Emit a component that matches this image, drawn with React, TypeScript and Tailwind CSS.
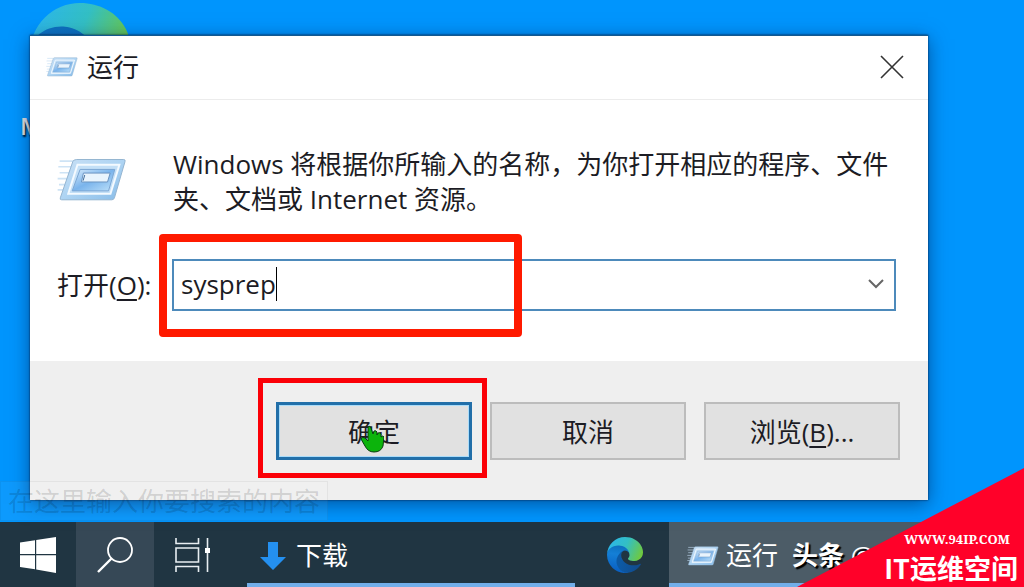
import { useState } from "react";

const uiFont = "font-['Open_Sans','Noto_Sans_CJK_SC',sans-serif]";

function RunIcon({ className }: { className?: string }) {
  return (
    <svg viewBox="20 34 212 136" className={className} aria-hidden="true">
      <defs>
        <linearGradient id="run-frame" x1="0" y1="0" x2="1" y2="1">
          <stop offset="0" stopColor="#c9e0f5" />
          <stop offset="0.5" stopColor="#aed4f3" />
          <stop offset="1" stopColor="#86bbe8" />
        </linearGradient>
        <linearGradient id="run-screen" x1="0" y1="0" x2="1" y2="1">
          <stop offset="0" stopColor="#d8ebfb" />
          <stop offset="0.5" stopColor="#7ab4ec" />
          <stop offset="1" stopColor="#bfe2fa" />
        </linearGradient>
      </defs>
      <path
        d="M28 45H80M24 62H74M28 80H68M22 98H62M26 116H56M22 132H50"
        stroke="#c3ddf3"
        strokeWidth="5"
        opacity="0.8"
      />
      <path
        d="M80 40H222Q228 40 226 46L194 156Q192 162 186 162H34Q28 162 30 156L68 46Q70 40 80 40Z"
        fill="url(#run-frame)"
        stroke="#94b4d0"
        strokeWidth="3"
      />
      <path d="M82 56H209L182 144H54Z" fill="#c4e0f7" stroke="#f4faff" strokeWidth="6" />
      <path d="M90 70H195L176 135H66Z" fill="url(#run-screen)" stroke="#7ba6d2" strokeWidth="3" />
      <path d="M100 81H181L173 108H94Z" fill="#e9f4fd" stroke="#6b94c0" strokeWidth="3" />
      <path d="M104 87L99 104" stroke="#3e6a9b" strokeWidth="3" />
    </svg>
  );
}

function EdgeIcon({ className }: { className?: string }) {
  return (
    <svg viewBox="0 0 256 256" className={className} aria-hidden="true">
      <defs>
        <linearGradient id="edge-deep" x1="0.2" y1="0.5" x2="1" y2="0.6">
          <stop offset="0" stopColor="#0c59a4" />
          <stop offset="1" stopColor="#114a8b" />
        </linearGradient>
        <linearGradient id="edge-blue" x1="0.5" y1="0" x2="0.4" y2="0.9">
          <stop offset="0" stopColor="#0b6dba" />
          <stop offset="0.4" stopColor="#147fd6" />
          <stop offset="1" stopColor="#0a62c4" />
        </linearGradient>
        <linearGradient id="edge-green" x1="0" y1="0.3" x2="1" y2="0.6">
          <stop offset="0" stopColor="#2cb6ea" />
          <stop offset="0.5" stopColor="#33bfc4" />
          <stop offset="1" stopColor="#6fc93f" />
        </linearGradient>
      </defs>
      <path
        fill="url(#edge-deep)"
        d="M235.68 190.46a91.22 91.22 0 0 1-10.54 4.71 101.85 101.85 0 0 1-35.9 6.46c-47.32 0-88.54-32.55-88.54-74.32A31.52 31.52 0 0 1 117.13 99.95c-42.8 1.8-53.8 46.4-53.8 72.53 0 73.88 68.09 81.37 82.76 81.37 7.91 0 19.84-2.3 27-4.56l1.31-.44a128.34 128.34 0 0 0 66.6-52.8 4 4 0 0 0-5.32-5.59z"
      />
      <path
        fill="url(#edge-blue)"
        d="M105.73 241.42A79.2 79.2 0 0 1 83 220.08a80.72 80.72 0 0 1 29.5-120.13c3.12-1.47 8.45-4.13 15.54-4a32.35 32.35 0 0 1 25.69 13 31.88 31.88 0 0 1 6.36 18.66c0-.21 24.46-79.6-80-79.6-43.9 0-80 41.66-80 78.21a130.15 130.15 0 0 0 12.11 56 128 128 0 0 0 156.38 67.11 75.55 75.55 0 0 1-62.78-8z"
      />
      <path
        fill="url(#edge-green)"
        d="M152.33 148.86c-.81 1.05-3.3 2.5-3.3 5.66 0 2.61 1.7 5.12 4.72 7.23 14.38 10 41.49 8.68 41.56 8.68a59.56 59.56 0 0 0 30.27-8.35 61.38 61.38 0 0 0 30.43-52.88c.26-22.41-8-37.31-11.34-43.91C223.46 23.84 177.72 0 128 0A128 128 0 0 0 0 126.2c.48-36.54 36.8-66.05 80-66.05 3.5 0 23.46.34 42 10.07 16.34 8.58 24.9 18.94 30.85 29.21 6.18 10.67 7.28 24.15 7.28 29.52s-2.74 13.33-7.8 19.91z"
      />
    </svg>
  );
}

function HandCursor({ className }: { className?: string }) {
  return (
    <svg viewBox="0 0 24 28" className={className} aria-hidden="true">
      <path
        d="M8 2q2-2 3 1l2 6 1-3q2-1 3 1v3l1-2q2-1 3 1v3q2-2 3 0l-1 9q-2 6-9 6-6 0-9-6L1 14q1-3 4-1l3 3Z"
        fill="#0cb40c"
        stroke="#0b3d12"
        strokeWidth="1"
        strokeLinejoin="round"
      />
    </svg>
  );
}

function RunDialog() {
  const [command, setCommand] = useState("sysprep");

  return (
    <section
      aria-label="运行"
      className="relative border-t border-[#14598f] bg-white text-[26px] text-[#1c1c24] shadow-[0_4px_18px_rgba(0,30,80,0.55),0_0_2px_rgba(0,20,50,0.9)]"
    >
      <header className="flex h-16 items-center border-b border-[#ececec] pr-6 pb-0.5 pl-4">
        <RunIcon className="h-6 w-8" />
        <h1 className="ml-[9px] flex-1 leading-9">运行</h1>
        <button type="button" aria-label="关闭">
          <svg viewBox="0 0 24 24" className="size-6" fill="none" stroke="#333" strokeWidth="1.6">
            <path d="M1 1L23 23M23 1L1 23" />
          </svg>
        </button>
      </header>

      <div className="pr-8 pb-[50px] pl-[27px]">
        <div className="flex pt-[47px]">
          <RunIcon className="mt-2 h-[50px] w-[70px] shrink-0" />
          <p className="ml-[46px] leading-[35px]">
            Windows 将根据你所输入的名称，为你打开相应的程序、文件夹、文档或 Internet 资源。
          </p>
        </div>

        <div className="mt-[42px] flex items-center">
          <label htmlFor="command" className="w-[115px] whitespace-nowrap">
            打开(<u className="underline-offset-4">O</u>):
          </label>
          <div className="relative flex h-[52px] flex-1 items-center border-2 border-[#4d8abb] pr-2 pb-0.5 pl-[7px]">
            <input
              id="command"
              value={command}
              onChange={(e) => setCommand(e.target.value)}
              className="field-sizing-content leading-9 outline-none"
            />
            <span className="h-[34px] w-px bg-black" />
            <button type="button" aria-label="展开列表" className="ml-auto">
              <svg viewBox="0 0 20 20" className="size-5" fill="none" stroke="#666" strokeWidth="2">
                <path d="M3 6L10 13L17 6" />
              </svg>
            </button>
            <div className="pointer-events-none absolute -top-[27px] -left-[15px] h-[103px] w-[363px] rounded border-8 border-[#ff1a00]" />
          </div>
        </div>
      </div>

      <footer className="flex justify-end gap-[18px] bg-[#efefef] pt-[41px] pr-7 pb-10">
        <button
          type="button"
          className="relative h-[58px] w-[196px] border-[3px] border-[#226fa9] bg-[#e1e1e1] pt-0.5 shadow-[inset_0_0_0_1px_#a9dcfa]"
        >
          确定
          <HandCursor className="absolute top-[20px] left-[81px] h-7 w-6" />
          <span className="pointer-events-none absolute -top-[27px] -right-[18px] -bottom-[21px] -left-[21px] border-[5px] border-[#fb0007]" />
        </button>
        <button
          type="button"
          className="h-[58px] w-[196px] border-2 border-[#bcbcbc] bg-[#e1e1e1] pt-0.5"
        >
          取消
        </button>
        <button
          type="button"
          className="h-[58px] w-[196px] border-2 border-[#bcbcbc] bg-[#e1e1e1] pt-0.5"
        >
          浏览(<u className="underline-offset-4">B</u>)...
        </button>
      </footer>
    </section>
  );
}

function Taskbar() {
  return (
    <nav className="flex h-[65px] bg-[#203542] text-[26px] text-white">
      <button type="button" aria-label="开始" className="flex w-[76px] items-center justify-center">
        <svg viewBox="0 0 36 36" className="size-9" fill="white">
          <path d="M0 5.500L15 3.300V17H0ZM16.200 3.100L36 0V17H16.200ZM0 18.200H15V32.200L0 30ZM16.200 18.200H36V36L16.200 32.500Z" />
        </svg>
      </button>
      <button
        type="button"
        aria-label="搜索"
        className="flex w-[78px] items-center justify-center bg-[#364856]"
      >
        <svg viewBox="0 0 36 36" className="size-9" fill="none" stroke="white" strokeWidth="1.8">
          <circle cx="23" cy="13" r="12" />
          <path d="M14.500 21.500L1 35" strokeWidth="2.400" />
        </svg>
      </button>
      <button
        type="button"
        aria-label="任务视图"
        className="flex w-[76px] items-center justify-center"
      >
        <svg viewBox="0 0 36 36" className="size-9" fill="none" stroke="#e8eef2" strokeWidth="1.6">
          <path d="M2 1V6.500H24.500V1M2 35V29.500H24.500V35M33.500 1V35" />
          <path d="M2 11H24.500V25H2Z" />
          <path d="M31 11H36V16H31Z" fill="white" stroke="none" />
        </svg>
      </button>
      <button
        type="button"
        className="ml-[17px] flex w-[328px] items-center border-b-4 border-[#72aee9] pt-1.5 pl-[13px]"
      >
        <svg viewBox="0 0 26 28" className="h-7 w-[26px]" fill="#2490f0">
          <path d="M8 0H18V15H26L13 28L0 15H8Z" />
        </svg>
        <span className="ml-[10px]">下载</span>
      </button>
      <button
        type="button"
        aria-label="Edge"
        className="flex w-[94px] items-center justify-center pl-1.5"
      >
        <EdgeIcon className="size-9" />
      </button>
      <button
        type="button"
        className="flex flex-1 items-center border-b-4 border-[#72aee9] bg-[#4c5c67] pt-1.5 pl-[18px]"
      >
        <RunIcon className="h-6 w-8" />
        <span className="ml-[7px]">运行</span>
        <span className="ml-[14px] font-bold whitespace-nowrap [text-shadow:2px_2px_1px_#000]">
          头条 <span className="font-normal">@</span>
        </span>
      </button>
    </nav>
  );
}

export default function App() {
  return (
    <div
      className={`relative flex min-h-screen flex-col overflow-hidden bg-[#0095fd] ${uiFont}`}
    >
      <EdgeIcon className="absolute top-[3px] left-[30px] size-[100px]" />
      <span className="absolute top-[110px] left-5 text-2xl font-semibold text-[#e4e4e4] [text-shadow:1px_2px_2px_#000]">
        M
      </span>

      <main className="flex-1 pt-[35px] pr-24 pb-[21px] pl-[30px]">
        <RunDialog />
      </main>
      <Taskbar />

      {/* fading search tooltip */}
      <div className="absolute bottom-[66px] left-0 border border-black/5 bg-white/5 px-[7px] text-[26px] leading-[38px] whitespace-nowrap text-black/15">
        在这里输入你要搜索的内容
      </div>

      {/* corner badge */}
      <div className="absolute right-0 bottom-0 flex h-[119px] w-[227px] flex-col items-end justify-end bg-[#ff0129] pr-1.5 text-white [clip-path:polygon(100%_0,100%_100%,0_100%)]">
        <span className="pr-2 font-['Noto_Serif','Liberation_Serif',serif] text-[13px] leading-[18px] font-bold">
          WWW.94IP.COM
        </span>
        <span className="font-['Noto_Sans_CJK_SC',sans-serif] text-[27px] leading-[39px] font-bold">
          IT运维空间
        </span>
      </div>
    </div>
  );
}
